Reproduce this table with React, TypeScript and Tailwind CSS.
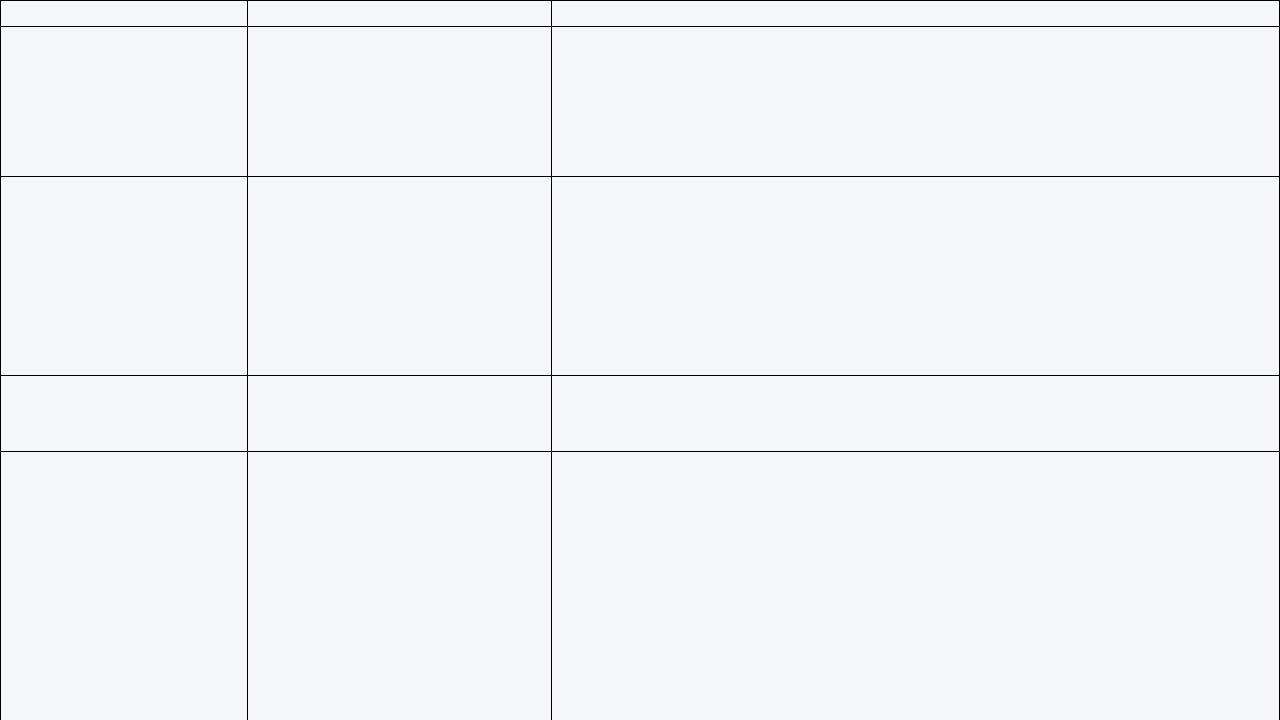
const rows = [
  { key: 'head', h: 'h-[26px]' },
  { key: 'r1', h: 'h-[150px]' },
  { key: 'r2', h: 'h-[199px]' },
  { key: 'r3', h: 'h-[76px]' },
  { key: 'r4', h: 'h-[300px]' },
];

export default function App() {
  return (
    <div className="min-h-screen bg-[#f5f7fb] font-['Liberation_Sans',sans-serif] text-sm text-gray-900">
      <div className="grid grid-cols-[247px_304px_728px] border-l border-t border-black">
        {rows.map((row) => (
          <div key={row.key} className="contents">
            <div className={`${row.h} border-b border-r border-black bg-[#f5f7fb]`} />
            <div className={`${row.h} border-b border-r border-black bg-[#f5f7fb]`} />
            <div className={`${row.h} border-b border-r border-black bg-[#f5f7fb]`} />
          </div>
        ))}
      </div>
    </div>
  );
}
